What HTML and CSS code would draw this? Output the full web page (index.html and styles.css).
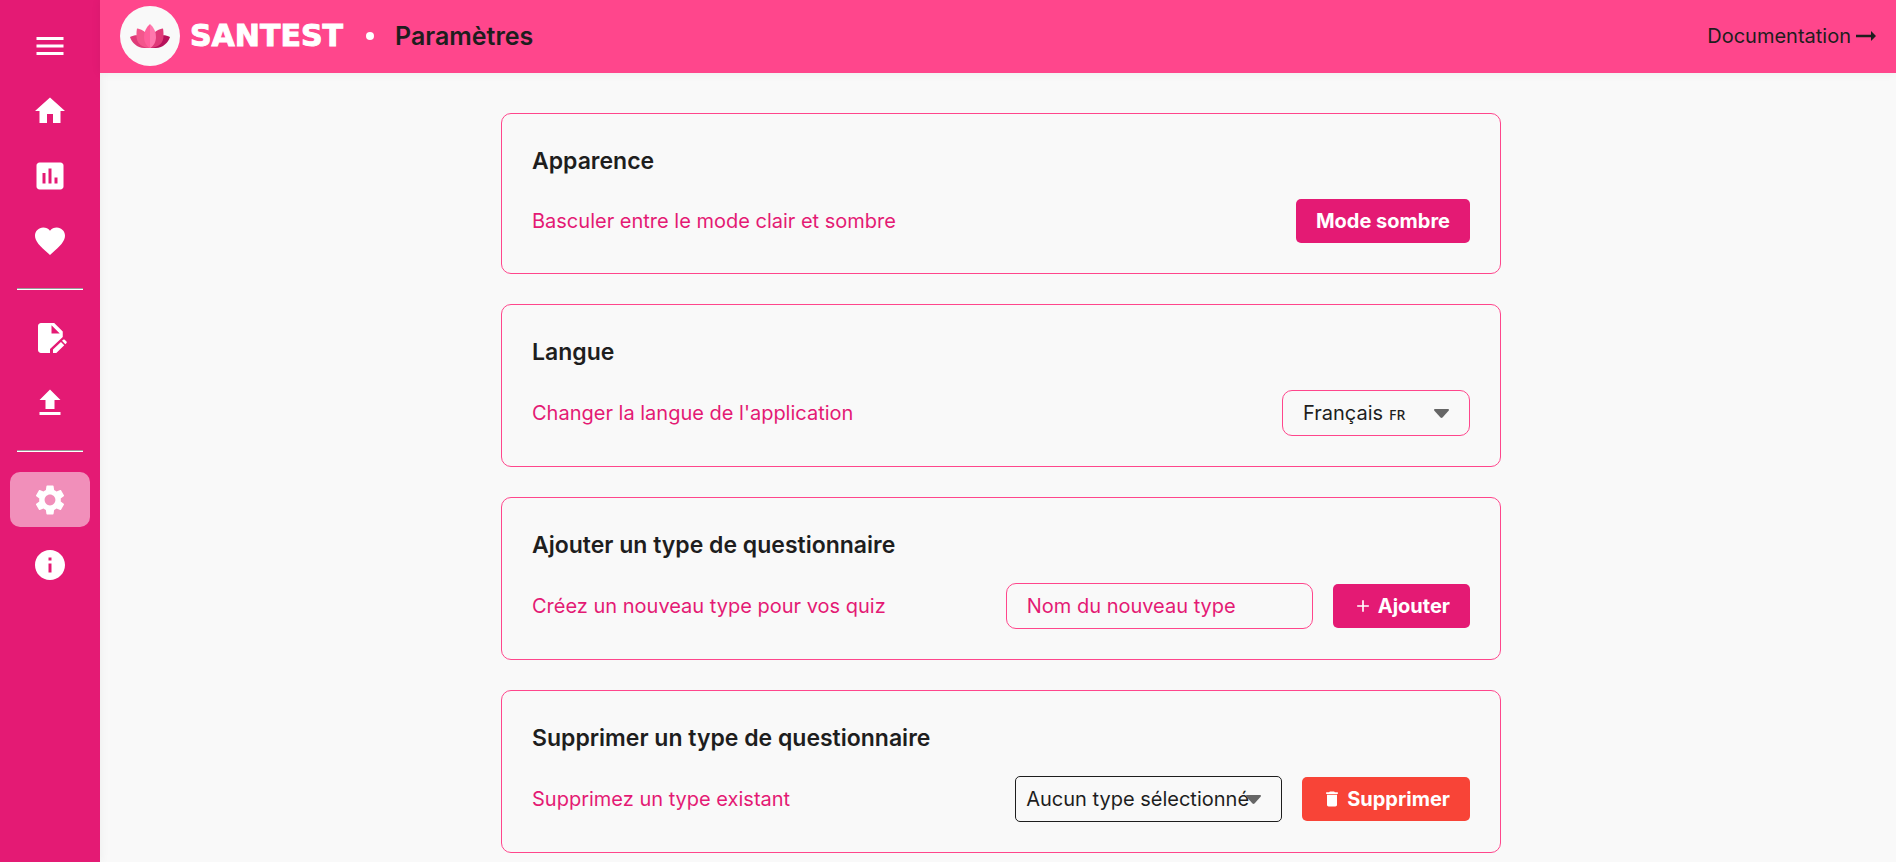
FILE: index.html
```html
<!DOCTYPE html>
<html lang="fr">
<head>
<meta charset="utf-8">
<meta name="viewport" content="width=device-width, initial-scale=1">
<title>Santest - Paramètres</title>
<link rel="stylesheet" href="styles.css">
</head>
<body>
<div class="app">
  <nav class="sidebar" aria-label="Navigation principale">
    <button class="nav-item" type="button" aria-label="Menu"><svg class="nav-icon" viewBox="0 0 24 24"><path d="M3 18h18v-2H3v2zm0-5h18v-2H3v2zm0-7v2h18V6H3z"/></svg></button>
    <a class="nav-item" href="#" aria-label="Accueil"><svg class="nav-icon" viewBox="0 0 24 24"><path d="M10 20v-6h4v6h5v-8h3L12 3 2 12h3v8z"/></svg></a>
    <a class="nav-item" href="#" aria-label="Statistiques"><svg class="nav-icon" viewBox="0 0 24 24"><path d="M19 3H5c-1.100 0-2 .9-2 2v14c0 1.100.9 2 2 2h14c1.100 0 2-.9 2-2V5c0-1.100-.9-2-2-2zM9 17H7v-7h2v7zm4 0h-2V7h2v10zm4 0h-2v-4h2v4z"/></svg></a>
    <a class="nav-item" href="#" aria-label="Favoris"><svg class="nav-icon" viewBox="0 0 24 24"><path d="M12 21.350l-1.450-1.320C5.400 15.360 2 12.280 2 8.500 2 5.420 4.420 3 7.500 3c1.740 0 3.410.81 4.500 2.090C13.090 3.810 14.760 3 16.500 3 19.580 3 22 5.420 22 8.500c0 3.780-3.400 6.860-8.550 11.540L12 21.350z"/></svg></a>
    <hr class="nav-rule">
    <a class="nav-item" href="#" aria-label="Créer"><svg class="nav-icon" viewBox="0 0 24 24"><path fill-rule="evenodd" d="M6 2h8.800L20.500 7.700V11.300L12 19.300V22H6c-1.100 0-2-.9-2-2V4c0-1.100.9-2 2-2zM13 3.500V9h5.500z"/><path d="M14 22v-2.300l5.300-5.100 2.200 2.200L16.200 22zM20 13.900l.8-.7c.3-.3.7-.3 1 0l1.200 1.200c.3.3.3.7 0 1l-.8.800z"/></svg></a>
    <a class="nav-item" href="#" aria-label="Importer"><svg class="nav-icon" viewBox="0 0 24 24"><path d="M9 16h6v-6h4l-7-7-7 7h4v6zm-4 2h14v2H5v-2z"/></svg></a>
    <hr class="nav-rule">
    <a class="nav-item nav-item-active" href="#" aria-label="Paramètres" aria-current="page"><svg class="nav-icon" viewBox="0 0 24 24"><path d="M19.140 12.940c.04-.3.060-.61.060-.94 0-.32-.02-.64-.07-.94l2.030-1.580c.18-.14.230-.41.120-.61l-1.920-3.320c-.12-.22-.37-.29-.59-.22l-2.390.96c-.5-.38-1.030-.7-1.620-.94L14.400 2.810c-.04-.24-.24-.41-.48-.41h-3.840c-.24 0-.43.170-.47.410L9.250 5.350C8.660 5.590 8.120 5.920 7.630 6.290L5.240 5.330c-.22-.08-.47 0-.59.220L2.740 8.870C2.620 9.080 2.660 9.340 2.860 9.480l2.030 1.580C4.840 11.360 4.800 11.690 4.800 12s.02.640.07.940l-2.030 1.580c-.18.140-.23.410-.12.610l1.920 3.320c.12.220.37.290.59.220l2.390-.96c.5.380 1.030.7 1.620.94l.36 2.540c.05.240.24.410.48.410h3.840c.24 0 .44-.17.470-.41l.36-2.540c.59-.24 1.130-.56 1.620-.94l2.390.96c.22.080.47 0 .59-.22l1.920-3.320c.12-.22.070-.47-.12-.61L19.140 12.940zM12 15.600c-1.980 0-3.600-1.620-3.600-3.600s1.620-3.600 3.600-3.600 3.600 1.620 3.600 3.600S13.980 15.600 12 15.600z"/></svg></a>
    <a class="nav-item" href="#" aria-label="À propos"><svg class="nav-icon" viewBox="0 0 24 24"><path d="M12 2C6.480 2 2 6.480 2 12s4.480 10 10 10 10-4.480 10-10S17.520 2 12 2zm1 15h-2v-6h2v6zm0-8h-2V7h2v2z"/></svg></a>
  </nav>

  <div class="page">
    <header class="topbar">
      <a class="brand" href="#">
        <span class="brand-badge">
          <svg class="lotus" viewBox="0 0 40 24" aria-hidden="true">
            <path fill="#df3a78" d="M0 13C3 11.500 6 11 9 11.500C14 13 18 17 20 24H14C7 23.500 2 19 0 13z"/>
            <path fill="#b5125a" d="M40 13C37 11.500 34 11 31 11.500C26 13 22 17 20 24H26C33 23.500 38 19 40 13z"/>
            <path fill="#f3568c" d="M7 4.500C11 5 15 7 17 11L20 24C12 24 6 19 6.500 11C6.500 8 6.700 6 7 4.500z"/>
            <path fill="#df3a78" d="M33 4.500C29 5 25 7 23 11L20 24C28 24 34 19 33.500 11C33.500 8 33.300 6 33 4.500z"/>
            <path fill="#ff5f9b" d="M20 0C16 3.500 14 8 14 13C14 18 16.500 22 20 24z"/>
            <path fill="#ff78ad" d="M20 0C24 3.500 26 8 26 13C26 18 23.500 22 20 24z"/>
          </svg>
        </span>
        <span class="brand-name">SANTEST</span>
      </a>
      <span class="topbar-dot"></span>
      <h1 class="topbar-title">Paramètres</h1>
      <a class="doc-link" href="#">Documentation<svg class="doc-arrow" viewBox="4 8 16 8" aria-hidden="true"><path d="M16.010 11H4v2h12.010v3L20 12l-3.990-4z"/></svg></a>
    </header>

    <main class="settings">
      <section class="card">
        <h2 class="card-title">Apparence</h2>
        <div class="card-row">
          <p class="card-text">Basculer entre le mode clair et sombre</p>
          <button class="btn" type="button">Mode sombre</button>
        </div>
      </section>

      <section class="card">
        <h2 class="card-title">Langue</h2>
        <div class="card-row">
          <label class="card-text" for="langue">Changer la langue de l'application</label>
          <div class="picker picker-lang">
            <select class="field" id="langue"><option>Français</option></select>
            <span class="picker-code">FR</span>
            <svg class="picker-arrow" viewBox="0 0 15 9" aria-hidden="true"><path d="M1 0h13q1.600.3.600 1.700L8.500 8.500q-1 .9-2 0L.4 1.700Q-.6.300 1 0z"/></svg>
          </div>
        </div>
      </section>

      <section class="card">
        <h2 class="card-title">Ajouter un type de questionnaire</h2>
        <div class="card-row">
          <label class="card-text" for="nouveau">Créez un nouveau type pour vos quiz</label>
          <div class="card-actions">
            <input class="field field-name" id="nouveau" type="text" placeholder="Nom du nouveau type">
            <button class="btn" type="button"><svg class="btn-icon" viewBox="0 0 24 24" aria-hidden="true"><path d="M19 13h-6v6h-2v-6H5v-2h6V5h2v6h6v2z"/></svg>Ajouter</button>
          </div>
        </div>
      </section>

      <section class="card">
        <h2 class="card-title">Supprimer un type de questionnaire</h2>
        <div class="card-row">
          <label class="card-text" for="existant">Supprimez un type existant</label>
          <div class="card-actions">
            <div class="picker picker-type">
              <select class="field field-dark" id="existant"><option>Aucun type sélectionné</option></select>
              <svg class="picker-arrow" viewBox="0 0 15 9" aria-hidden="true"><path d="M1 0h13q1.600.3.600 1.700L8.500 8.500q-1 .9-2 0L.4 1.700Q-.6.300 1 0z"/></svg>
            </div>
            <button class="btn btn-danger" type="button"><svg class="btn-icon" viewBox="0 0 24 24" aria-hidden="true"><path d="M6 19c0 1.100.9 2 2 2h8c1.100 0 2-.9 2-2V7H6v12zM19 4h-3.500l-1-1h-5l-1 1H5v2h14V4z"/></svg>Supprimer</button>
          </div>
        </div>
      </section>
    </main>
  </div>
</div>
</body>
</html>
```
FILE: styles.css
```css
:root {
  --pink: #ff468c;
  --deep: #e41a74;
  --paper: #f9f9f9;
  --ink: #1e1e1e;
}

* { box-sizing: border-box; }

body {
  margin: 0;
  background: var(--paper);
  color: var(--ink);
  font-family: Inter, sans-serif;
  font-size: 20px;
  line-height: 24px;
}

a { color: inherit; text-decoration: none; }

button, input, select { font: inherit; }

.app {
  display: flex;
  min-height: 100vh;
}

.sidebar {
  display: flex;
  flex-direction: column;
  gap: 10px;
  flex: none;
  width: 100px;
  padding: 18px 10px;
  background: var(--deep);
  box-shadow: 0 0 10px rgba(0, 0, 0, 0.06);
}

.nav-item {
  display: flex;
  align-items: center;
  justify-content: center;
  height: 55px;
  padding: 0;
  border: 0;
  border-radius: 10px;
  background: none;
}

.nav-item-active { background: #f18fba; }

.nav-icon {
  width: 36px;
  height: 36px;
  fill: #fff;
}

.nav-rule {
  width: 66px;
  margin: 10px auto;
  border: 0;
  border-top: 1px solid #9a9a9a;
  border-bottom: 1px solid #fff;
}

.page {
  flex: 1;
  min-width: 0;
}

.topbar {
  display: flex;
  align-items: center;
  height: 73px;
  padding: 0 20px 1px;
  background: var(--pink);
  box-shadow: 0 0 10px rgba(0, 0, 0, 0.06);
}

.brand {
  display: flex;
  align-items: center;
  gap: 10px;
}

.brand-badge {
  display: grid;
  place-items: center;
  width: 60px;
  height: 60px;
  border-radius: 50%;
  background: var(--paper);
}

.lotus {
  width: 40px;
  height: 24px;
}

.brand-name {
  width: 156px;
  color: #fff;
  font-family: "DejaVu Sans", sans-serif;
  font-size: 30px;
  font-weight: 700;
  -webkit-text-stroke: 1px #fff;
}

.topbar-dot {
  width: 8px;
  height: 8px;
  margin: 0 21px 0 20px;
  border-radius: 50%;
  background: #fff;
}

.topbar-title {
  margin: 0;
  font-size: 25px;
  font-weight: 600;
}

.doc-link {
  display: flex;
  align-items: center;
  gap: 5px;
  margin-left: auto;
}

.doc-arrow {
  width: 20px;
  height: 10px;
  fill: var(--ink);
}

.settings {
  display: grid;
  grid-template-columns: minmax(0, 1000px);
  justify-content: center;
  gap: 30px;
  padding: 40px 0 9px 6px;
}

.card {
  padding: 30px;
  border: 1px solid var(--pink);
  border-radius: 10px;
}

.card-title {
  margin: 0 0 20px;
  font-size: 23px;
  font-weight: 600;
  line-height: 35px;
}

.card-row {
  display: flex;
  align-items: center;
  justify-content: space-between;
  gap: 20px;
}

.card-text {
  margin: 0;
  color: var(--deep);
}

.card-actions {
  display: flex;
  align-items: center;
  gap: 20px;
}

.btn {
  display: flex;
  align-items: center;
  gap: 5px;
  padding: 10px 20px;
  border: 0;
  border-radius: 5px;
  background: var(--deep);
  color: #fff;
  font-weight: 700;
  line-height: 24px;
}

.btn-danger { background: #f84437; }

.btn-icon {
  width: 20px;
  height: 20px;
  fill: #fff;
}

.field {
  width: 100%;
  height: 46px;
  padding: 0 20px;
  border: 1px solid var(--pink);
  border-radius: 10px;
  background: transparent;
  color: var(--ink);
  appearance: none;
}

.field-name { width: 307px; }

.field::placeholder {
  color: var(--deep);
  opacity: 1;
}

.field-dark {
  padding: 0 10px;
  border-color: var(--ink);
  border-radius: 5px;
}

.picker { position: relative; }

.picker-lang { width: 188px; }

.picker-type { width: 267px; }

.picker-code {
  position: absolute;
  top: 13px;
  left: 107px;
  font-family: "Noto Sans", sans-serif;
  font-size: 14px;
  font-weight: 500;
  pointer-events: none;
}

.picker-arrow {
  position: absolute;
  top: 19px;
  right: 21px;
  width: 15px;
  height: 9px;
  fill: #666;
  pointer-events: none;
}
```
